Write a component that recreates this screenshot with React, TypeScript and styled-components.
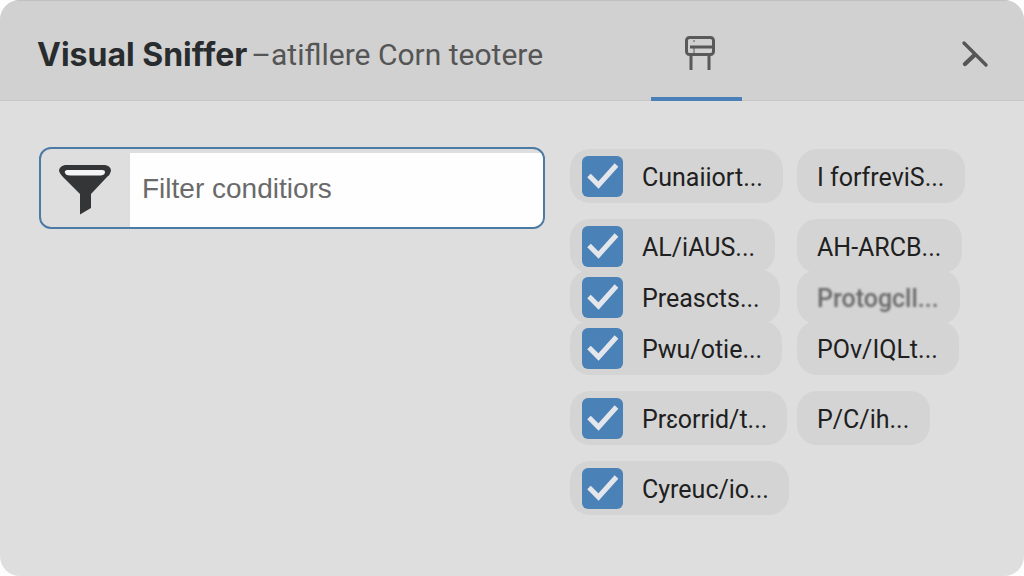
import React from 'react';
import styled, { createGlobalStyle, css } from 'styled-components';

const GlobalStyle = createGlobalStyle`
  * { box-sizing: border-box; }
  body {
    margin: 0;
    background: #fdfdfd;
    font-family: Roboto, "Liberation Sans", sans-serif;
  }
  button, input { font: inherit; }
`;

const Window = styled.main`
  display: flex;
  flex-direction: column;
  min-height: 100vh;
  border-radius: 20px;
  overflow: hidden;
  background: #dedede;
`;

const Header = styled.header`
  display: flex;
  height: 101px;
  padding: 0 24px 0 37px;
  background: #d1d1d1;
  box-shadow: inset 0 1px #c2c0c0, inset 0 -1px #c6c6c6;
`;

const Heading = styled.div`
  flex: 1;
  display: flex;
  align-items: center;
  gap: 4px;
  padding-top: 8px;
  white-space: nowrap;
`;

const Title = styled.h1`
  margin: 0;
  font-family: Inter, sans-serif;
  font-size: 32px;
  font-weight: 700;
  line-height: 40px;
  color: #292c2e;
`;

const Subtitle = styled.span`
  font-size: 30px;
  line-height: 40px;
  color: #555555;
`;

const HeaderTools = styled.div`
  display: flex;
  flex: 0 0 349px;
  justify-content: space-between;
`;

const Tab = styled.button`
  width: 91px;
  padding: 12px 0 0 6px;
  border: 0;
  border-bottom: 4px solid #4a7fb8;
  background: none;
  color: #595959;
`;

const CloseButton = styled.button`
  display: grid;
  place-items: center;
  width: 50px;
  padding: 6px 0 0;
  border: 0;
  background: none;
  color: #565656;
`;

const Content = styled.section`
  display: flex;
  align-items: flex-start;
  gap: 25px;
  padding: 46px 40px 40px 39px;
`;

const SearchField = styled.label`
  flex: 1;
  min-width: 0;
  display: flex;
  height: 82px;
  border: 2px solid #4b7aa5;
  border-radius: 12px;
  overflow: hidden;
`;

const FilterIcon = styled.span`
  display: grid;
  place-items: center;
  flex: 0 0 89px;
  padding: 4px 2px 0 0;
`;

const SearchInput = styled.input`
  flex: 1;
  min-width: 0;
  margin-top: 4px;
  padding: 0 12px 2px;
  border: 0;
  outline: 0;
  background: #fefefe;
  font-family: "Liberation Sans", sans-serif;
  font-size: 28px;
  &::placeholder { color: #6a6a6a; opacity: 1; }
`;

const Options = styled.div`
  flex: 0 0 414px;
  display: flex;
  flex-direction: column;
  gap: 16px;
  padding-top: 2px;
`;

const OptionGroup = styled.div`
  display: flex;
  flex-direction: column;
`;

const OptionRow = styled.div`
  display: grid;
  grid-template-columns: 216px 1fr;
  justify-items: start;
  gap: 11px;
  & + & { margin-top: -3px; }
`;

const chip = css`
  display: flex;
  align-items: center;
  height: 54px;
  border: 0;
  border-radius: 20px;
  background: #d4d4d4;
  color: #202020;
  font-size: 25px;
  line-height: 32px;
  white-space: nowrap;
`;

const ChipText = styled.span<{ $faded?: boolean }>`
  padding-top: 4px;
  ${({ $faded }) => $faded && css`
    color: #6a6a6a;
    font-weight: 500;
    filter: blur(1px);
  `}
`;

const CheckChip = styled.label`
  ${chip}
  gap: 19px;
  padding: 0 20px 0 12px;
`;

const TagChip = styled.button`
  ${chip}
  padding: 0 21px 0 20px;
`;

const CheckMark = styled.span`
  display: grid;
  width: 41px;
  height: 41px;
  & > * { grid-area: 1 / 1; }
  svg { pointer-events: none; visibility: hidden; }
  input:checked + svg { visibility: visible; }
`;

const CheckInput = styled.input`
  appearance: none;
  width: 41px;
  height: 41px;
  margin: 0;
  border-radius: 6px;
  background: #bdbdbd;
  &:checked { background: #4a82b8; }
`;

type Option = { label: string; tag?: string; faded?: boolean };

const groups: Option[][] = [
  [{ label: 'Cunaiiort...', tag: 'I forfreviS...' }],
  [
    { label: 'AL/iAUS...', tag: 'AH-ARCB...' },
    { label: 'Preascts...', tag: 'Protogcll...', faded: true },
    { label: 'Pwu/otie...', tag: 'POv/IQLt...' },
  ],
  [{ label: 'Prɛorrid/t...', tag: 'P/C/ih...' }],
  [{ label: 'Cyreuc/io...' }],
];

export default function App() {
  return (
    <>
      <GlobalStyle />
      <Window>
        <Header>
          <Heading>
            <Title>Visual Sniffer</Title>
            <Subtitle>–atifllere Corn teotere</Subtitle>
          </Heading>
          <HeaderTools>
            <Tab type="button" aria-label="Panel">
              <svg width="32" height="36" viewBox="0 0 32 36" fill="none" stroke="currentColor" strokeWidth="3">
                <rect x="2.5" y="2.5" width="27" height="17" rx="3" />
                <path d="M6 12H28M7 19.5V35M25 19.5V35" />
                <path d="M10 13V18M9 6H11" strokeWidth="1" />
              </svg>
            </Tab>
            <CloseButton type="button" aria-label="Close">
              <svg width="28" height="28" viewBox="0 0 28 28" fill="none" stroke="currentColor" strokeLinecap="round">
                <path d="M3 3L25 25" strokeWidth="3.4" />
                <path d="M13 15.5L4 24" strokeWidth="4.4" />
              </svg>
            </CloseButton>
          </HeaderTools>
        </Header>
        <Content>
          <SearchField>
            <FilterIcon>
              <svg width="52" height="50" viewBox="0 0 52 50">
                <path
                  fill="#333536"
                  d="M6 0H46Q52 1 52 6Q51 10 48 12L32 29V43L21 49.5V29L4 12Q0 8 0 5Q1 1 6 0Z"
                />
                <path fill="#f5f5f5" d="M8 5H43Q46 5 46 7Q46 10 42 10.5H11Q7 10.5 6 8Q5 6 8 5Z" />
              </svg>
            </FilterIcon>
            <SearchInput type="text" aria-label="Filter conditiors" placeholder="Filter conditiors" />
          </SearchField>
          <Options>
            {groups.map((rows, i) => (
              <OptionGroup key={i}>
                {rows.map(({ label, tag, faded }) => (
                  <OptionRow key={label}>
                    <CheckChip>
                      <CheckMark>
                        <CheckInput type="checkbox" defaultChecked />
                        <svg width="41" height="41" viewBox="0 0 41 41" fill="none" stroke="#e3e6ea" strokeWidth="5">
                          <path d="M7 19.5L16.5 29L34.5 9" />
                        </svg>
                      </CheckMark>
                      <ChipText>{label}</ChipText>
                    </CheckChip>
                    {tag && (
                      <TagChip type="button">
                        <ChipText $faded={faded}>{tag}</ChipText>
                      </TagChip>
                    )}
                  </OptionRow>
                ))}
              </OptionGroup>
            ))}
          </Options>
        </Content>
      </Window>
    </>
  );
}
